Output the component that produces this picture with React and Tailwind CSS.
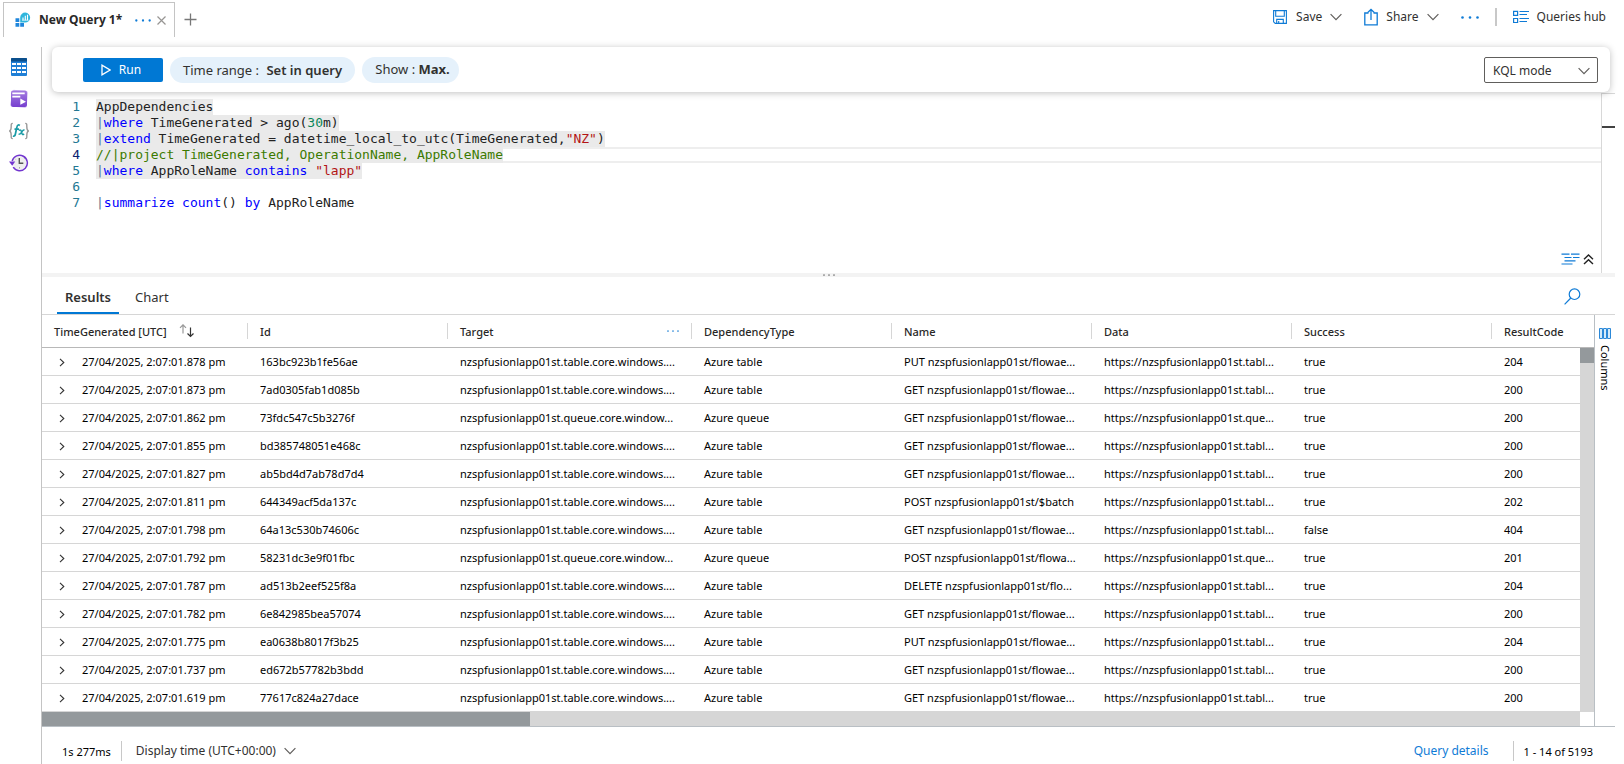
import { useState } from 'react'
import clsx from 'clsx'

const KEYWORD = 'text-[#0000ff]'
const STRING = 'text-[#b31515]'
const NUMBER = 'text-[#098658]'
const COMMENT = 'text-[#3c7a00]'
const PLAIN = 'text-[#222222]'
const PIPE = 'text-[#5a7a96]'

const queryLines = [
  { selected: true, tokens: [['AppDependencies', PLAIN]] },
  { selected: true, tokens: [['|', PIPE], ['where', KEYWORD], [' TimeGenerated > ago(', PLAIN], ['30', NUMBER], ['m)', PLAIN]] },
  { selected: true, tokens: [['|', PIPE], ['extend', KEYWORD], [' TimeGenerated = datetime_local_to_utc(TimeGenerated,', PLAIN], ['"NZ"', STRING], [')', PLAIN]] },
  { selected: true, active: true, tokens: [['//|project TimeGenerated, OperationName, AppRoleName', COMMENT]] },
  { selected: true, tokens: [['|', PIPE], ['where', KEYWORD], [' AppRoleName ', PLAIN], ['contains', KEYWORD], [' ', PLAIN], ['"lapp"', STRING]] },
  { tokens: [] },
  { tokens: [['|', PIPE], ['summarize', KEYWORD], [' ', PLAIN], ['count', KEYWORD], ['() ', PLAIN], ['by', KEYWORD], [' AppRoleName', PLAIN]] },
]

const TABLE_HOST = 'nzspfusionlapp01st.table.core.windows....'
const QUEUE_HOST = 'nzspfusionlapp01st.queue.core.window...'
const TABLE_URL = 'https://nzspfusionlapp01st.tabl...'
const QUEUE_URL = 'https://nzspfusionlapp01st.que...'

const rows = [
  ['2:07:01.878', '163bc923b1fe56ae', 'table', 'PUT nzspfusionlapp01st/flowae...', 'true', '204'],
  ['2:07:01.873', '7ad0305fab1d085b', 'table', 'GET nzspfusionlapp01st/flowae...', 'true', '200'],
  ['2:07:01.862', '73fdc547c5b3276f', 'queue', 'GET nzspfusionlapp01st/flowae...', 'true', '200'],
  ['2:07:01.855', 'bd385748051e468c', 'table', 'GET nzspfusionlapp01st/flowae...', 'true', '200'],
  ['2:07:01.827', 'ab5bd4d7ab78d7d4', 'table', 'GET nzspfusionlapp01st/flowae...', 'true', '200'],
  ['2:07:01.811', '644349acf5da137c', 'table', 'POST nzspfusionlapp01st/$batch', 'true', '202'],
  ['2:07:01.798', '64a13c530b74606c', 'table', 'GET nzspfusionlapp01st/flowae...', 'false', '404'],
  ['2:07:01.792', '58231dc3e9f01fbc', 'queue', 'POST nzspfusionlapp01st/flowa...', 'true', '201'],
  ['2:07:01.787', 'ad513b2eef525f8a', 'table', 'DELETE nzspfusionlapp01st/flo...', 'true', '204'],
  ['2:07:01.782', '6e842985bea57074', 'table', 'GET nzspfusionlapp01st/flowae...', 'true', '200'],
  ['2:07:01.775', 'ea0638b8017f3b25', 'table', 'PUT nzspfusionlapp01st/flowae...', 'true', '204'],
  ['2:07:01.737', 'ed672b57782b3bdd', 'table', 'GET nzspfusionlapp01st/flowae...', 'true', '200'],
  ['2:07:01.619', '77617c824a27dace', 'table', 'GET nzspfusionlapp01st/flowae...', 'true', '200'],
]

const headers = ['TimeGenerated [UTC]', 'Id', 'Target', 'DependencyType', 'Name', 'Data', 'Success', 'ResultCode']

function Chevron({ className }) {
  return (
    <svg width="12" height="8" viewBox="0 0 12 8" className={className} fill="none" stroke="currentColor" strokeWidth="1.2">
      <path d="M0.6 1.2 6 6.6l5.4-5.4" />
    </svg>
  )
}

function LogsIcon() {
  return (
    <svg width="16" height="16" viewBox="0 0 16 16">
      <g fill="#1f86dc">
        <path d="M0.5 6.2h3.8V10H0.5zM0.5 11h3.8v3.8H0.5zM5.2 11H9v3.8H5.2z" />
      </g>
      <path d="M10.3 0.6a5 5 0 1 1-.3 10H5.2V5.4a5 5 0 0 1 5.1-4.8z" fill="#2fb6dd" />
      <path d="M8 5.5v2.7M10.3 3.8v4.4M12.5 2.8v5.4" stroke="#fff" strokeWidth="1.1" />
      <path d="M7 8.2h6.5" stroke="#fff" strokeWidth=".7" />
    </svg>
  )
}

function TablesIcon() {
  return (
    <svg width="16" height="18" viewBox="0 0 16 18">
      <rect width="16" height="18" rx="1" fill="#1f7fd6" />
      <path d="M0 3.4V1a1 1 0 0 1 1-1h14a1 1 0 0 1 1 1v2.4z" fill="#0b4f8c" />
      <g fill="#fff">
        <path d="M1 5h4v2H1zM6 5h4v2H6zM11 5h4v2h-4zM1 9h4v2H1zM6 9h4v2H6zM11 9h4v2h-4zM1 13h4v2H1zM6 13h4v2H6zM11 13h4v2h-4z" />
      </g>
    </svg>
  )
}

function QueriesIcon() {
  return (
    <svg width="20" height="20" viewBox="0 0 20 20">
      <defs>
        <linearGradient id="queries" x1="0" y1="0" x2="0" y2="1">
          <stop offset="0" stopColor="#a37be0" />
          <stop offset="1" stopColor="#7740cf" />
        </linearGradient>
      </defs>
      <path d="M4.5.8 17 2a2 2 0 0 1 2 2l-1.3 13a2 2 0 0 1-2 2L3 17.5a2 2 0 0 1-2-2z" fill="#d9c8f6" />
      <rect x="2" y="1.5" width="16" height="16.5" rx="2" fill="url(#queries)" />
      <path d="M3.3 3.5h12.4v1.8H3.3zM3.3 6.8h8v1.8h-8z" fill="#fff" />
      <path d="M11.3 9.6 17 12.7l-5.7 3.1z" fill="#fff" />
    </svg>
  )
}

function FunctionsIcon() {
  return (
    <svg width="20" height="18" viewBox="0 0 20 18" fill="none">
      <path d="M3.8 1.4C2 1.4 2.2 2.3 2.2 4.5S2 8.500.6 9c1.4.5 1.6 2.3 1.6 4.5s-.2 3.1 1.6 3.1" stroke="#999" strokeWidth="1.4" />
      <path d="M16.2 1.4c1.8 0 1.6.9 1.6 3.1s.2 4 1.6 4.5c-1.4.5-1.6 2.3-1.6 4.5s.2 3.1-1.6 3.1" stroke="#999" strokeWidth="1.4" />
      <path d="M10.8 3.5c-1.4-1.2-2.6-.3-2.9 1.5L6.4 12c-.3 1.7-1.2 2.5-2.3 1.7M5.5 7.2h4.5" stroke="#1a9ba6" strokeWidth="1.7" />
      <path d="M9.8 8.5c2-1.5 2.5.2 2.9 2s.8 2.8 2.4 1.4M15.5 7.8c-1.6.2-2.4 1.6-3 2.6s-1.4 2-2.9 1.9" stroke="#1a9ba6" strokeWidth="1.4" />
    </svg>
  )
}

function HistoryIcon() {
  return (
    <svg width="20" height="18" viewBox="0 0 20 18" fill="none">
      <circle cx="10.5" cy="9" r="6.6" fill="#eeeeee" />
      <path d="M3.2 7a7.7 7.7 0 1 1 1 6.2" stroke="#7236cf" strokeWidth="1.5" />
      <path d="M0 7.6h6.2l-3 4.2z" fill="#7236cf" />
      <path d="M10.3 4v5.3h4" stroke="#555" strokeWidth="1.4" />
      <path d="M10.5 13v1.6M15 5l.8-.8M5.8 4.6l.8.8" stroke="#aaa" />
    </svg>
  )
}

function SaveIcon() {
  return (
    <svg width="16" height="16" viewBox="0 0 16 16" fill="none" stroke="#0f7bd6" strokeWidth="1.1">
      <path d="M1.6 1.6h12.8v12.8H3.2L1.6 12.8z" />
      <path d="M3.7 1.6v5.6h8.6V1.6M4.7 14.4v-4h6.6v4M6.7 14.4V12" />
    </svg>
  )
}

function ShareIcon() {
  return (
    <svg width="14" height="18" viewBox="0 0 14 18" fill="none" stroke="#0f7bd6" strokeWidth="1.3">
      <path d="M4.5 5H.8v11.8h12.4V5H9.5M7 12V1.4M3.8 4.5 7 1.3l3.2 3.2" />
    </svg>
  )
}

function HubIcon() {
  return (
    <svg width="16" height="14" viewBox="0 0 16 14" fill="none" stroke="#0f7bd6" strokeWidth="1.2">
      <path d="M.6 1.3h4v4h-4zM.6 8.5h4v4h-4zM6.5 1.5H16M6.5 4.5H14M6.5 8.5H16M6.5 11.5H14" />
    </svg>
  )
}

function Dots({ size = 3, className }) {
  return (
    <svg width={size * 6} height={size} viewBox="0 0 18 3" className={className} fill="currentColor">
      <circle cx="1.5" cy="1.5" r="1.3" />
      <circle cx="9" cy="1.5" r="1.3" />
      <circle cx="16.5" cy="1.5" r="1.3" />
    </svg>
  )
}

function TopBar() {
  return (
    <header className="flex h-[47px] justify-between">
      <div className="flex pt-[2px] pl-[3px]">
        <div className="flex h-[35px] w-[172px] items-center border border-b-0 border-[#c4c4c4] pl-[11px]">
          <LogsIcon />
          <span className="ml-2 text-xs font-bold whitespace-nowrap text-[#292827]">New Query 1*</span>
          <div className="mr-2 ml-auto flex items-center gap-[6px]">
            <button aria-label="Tab options" className="text-[#0f7bd6]">
              <Dots className="w-4" />
            </button>
            <button aria-label="Close tab" className="text-[#979593]">
              <svg width="9" height="9" viewBox="0 0 9 9" stroke="currentColor" strokeWidth="1.2">
                <path d="m.5.5 8 8M8.5.5l-8 8" />
              </svg>
            </button>
          </div>
        </div>
        <button aria-label="New tab" className="ml-[9px] h-[35px] text-[#777777]">
          <svg width="13" height="13" viewBox="0 0 13 13" stroke="currentColor" strokeWidth="1.3">
            <path d="M6.5.5v12M.5 6.5h12" />
          </svg>
        </button>
      </div>

      <div className="flex h-[34px] items-center text-xs text-[#323130]">
        <button className="flex items-center">
          <SaveIcon />
          <span className="ml-2">Save</span>
          <Chevron className="ml-2 text-[#605e5c]" />
        </button>
        <button className="ml-[22px] flex items-center">
          <ShareIcon />
          <span className="ml-2">Share</span>
          <Chevron className="ml-2 text-[#605e5c]" />
        </button>
        <button aria-label="More actions" className="ml-[22px] text-[#0f7bd6]">
          <Dots />
        </button>
        <div className="ml-4 h-[18px] w-[2px] bg-[#c8c8c8]" />
        <button className="mr-[9px] ml-4 flex items-center">
          <HubIcon />
          <span className="ml-2">Queries hub</span>
        </button>
      </div>
    </header>
  )
}

function SideRail() {
  const items = [
    ['Tables', TablesIcon],
    ['Queries', QueriesIcon],
    ['Functions', FunctionsIcon],
    ['Query history', HistoryIcon],
  ]
  return (
    <nav className="flex w-[41px] shrink-0 flex-col gap-3 pt-[10px]">
      {items.map(([label, Icon]) => (
        <button key={label} aria-label={label} className="flex h-5 w-[38px] items-center justify-center">
          <Icon />
        </button>
      ))}
    </nav>
  )
}

function RunBar() {
  return (
    <div className="relative z-10 mr-[5px] ml-[10px] flex h-[45px] items-center rounded-md bg-white pr-3 pl-[31px] text-[13px] text-[#323130] shadow-[0_1px_7px_rgba(0,0,0,0.25)]">
      <button className="flex h-6 w-20 items-center justify-center gap-2 rounded-xs bg-[#0078d4] pr-1 text-xs text-white">
        <svg width="10" height="12" viewBox="0 0 10 12" fill="none" stroke="currentColor" strokeWidth="1.3">
          <path d="M1 1.2v9.6L9 6z" />
        </svg>
        Run
      </button>
      <button className="ml-[7px] h-[26px] w-[185px] rounded-full bg-[#e5f1fb] pt-[2px] whitespace-nowrap">
        Time range : <span className="ml-1 font-semibold">Set in query</span>
      </button>
      <button className="ml-[7px] h-[26px] w-[97px] rounded-full bg-[#e5f1fb] pt-px pl-1 whitespace-nowrap">
        Show : <span className="font-bold">Max.</span>
      </button>
      <div className="relative ml-auto h-[26px] w-[114px]">
        <select aria-label="Editor mode" className="h-full w-full appearance-none rounded-xs border border-[#605e5c] bg-white pt-[2px] pl-2 text-xs">
          <option>KQL mode</option>
          <option>Simple mode</option>
        </select>
        <Chevron className="pointer-events-none absolute top-[10px] right-2 text-[#605e5c]" />
      </div>
    </div>
  )
}

function Editor() {
  return (
    <div className="relative flex h-[181px]">
      <div className="flex-1 pt-[7px] font-['DejaVu_Sans_Mono',monospace] text-[13px] leading-4">
        {queryLines.map((line, i) => (
          <div key={i} className="flex h-4">
            <span className={clsx('w-[38px] text-right', line.active ? 'text-[#0b216f]' : 'text-[#237893]')}>{i + 1}</span>
            <code className={clsx("ml-4 font-['DejaVu_Sans_Mono',monospace] whitespace-pre", line.selected && 'bg-[#eaeaea]')}>
              {line.tokens.map(([text, color], j) => (
                <span key={j} className={color}>{text}</span>
              ))}
            </code>
            {line.active && <div className="flex-1 border-y-2 border-[#eeeeee]" />}
          </div>
        ))}
      </div>
      {/* overview ruler */}
      <div className="mt-px w-[14px] border-t border-l border-[#d8d8d8] pt-8">
        <div className="h-[2px] bg-[#424242]" />
      </div>
      <div className="absolute right-[21px] bottom-2 flex items-center gap-[3px]">
        <button aria-label="Format query">
          <svg width="19" height="12" viewBox="0 0 19 12" stroke="#0f7bd6" strokeWidth="1.2">
            <path d="M.5 1.2h8M10 1.2h8.5M3.5 4.5h7M12 4.5h6.5M3.5 7.8h11M.5 11h11" />
          </svg>
        </button>
        <button aria-label="Collapse editor">
          <svg width="11" height="11" viewBox="0 0 11 11" fill="none" stroke="#222" strokeWidth="1.4">
            <path d="m1 5.3 4.500-4.300L10 5.300M1 10l4.500-4.300L10 10" />
          </svg>
        </button>
      </div>
    </div>
  )
}

function ResultTabs({ tab, setTab }) {
  return (
    <div className="flex h-[38px] items-end justify-between border-b border-[#d6d6d6] pl-[15px] text-[13px] text-[#323130]">
      <div className="flex h-full gap-2" role="tablist">
        {['Results', 'Chart'].map(name => (
          <button
            key={name}
            role="tab"
            aria-selected={tab === name}
            onClick={() => setTab(name)}
            className={clsx('h-full border-b-2 px-2 pt-[7px]', tab === name ? 'border-[#0078d4] font-semibold' : 'border-transparent')}
          >
            {name}
          </button>
        ))}
      </div>
      <button aria-label="Search results" className="mr-[34px] mb-[9px]">
        <svg width="17" height="17" viewBox="0 0 17 17" fill="none" stroke="#0f7bd6" strokeWidth="1.2">
          <circle cx="10.5" cy="6.2" r="5.3" />
          <path d="M6.800 10 .6 16.300" />
        </svg>
      </button>
    </div>
  )
}

function HeaderCell({ name, last }) {
  return (
    <th className="h-[33px] border-b border-[#b8b8b8] p-0 text-left font-medium text-[#292827]">
      <div className={clsx('flex h-4 items-center pl-3', !last && 'border-r border-[#d6d6d6]')}>
        <span className="pt-[2px]">{name}</span>
        {name === 'TimeGenerated [UTC]' && (
          <button aria-label="Sort" className="ml-3">
            <svg width="16" height="14" viewBox="0 0 16 14" fill="none" strokeWidth="1.2">
              <path d="M4 9.500V.8M1 3.800l3-3 3 3" stroke="#999" />
              <path d="M11.500 3.500v9M8.500 9.500l3 3 3-3" stroke="#333" />
            </svg>
          </button>
        )}
        {name === 'Target' && (
          <button aria-label="Column options" className="mr-3 ml-auto text-[#2b88d8]">
            <Dots size={2} />
          </button>
        )}
      </div>
    </th>
  )
}

function ResultsTable() {
  return (
    <div className="min-w-0 flex-1">
      <div className="relative">
        <table className="w-full table-fixed border-separate border-spacing-0 text-[11px] whitespace-nowrap text-black">
          <colgroup>
            <col className="w-[206px]" />
            <col className="w-[200px]" />
            <col className="w-[244px]" />
            <col className="w-[200px]" />
            <col className="w-[200px]" />
            <col className="w-[200px]" />
            <col className="w-[200px]" />
            <col />
          </colgroup>
          <thead>
            <tr>
              {headers.map((name, i) => <HeaderCell key={name} name={name} last={i === headers.length - 1} />)}
            </tr>
          </thead>
          <tbody>
            {rows.map(([time, id, type, name, success, code]) => {
              const cells = [
                id,
                type === 'queue' ? QUEUE_HOST : TABLE_HOST,
                `Azure ${type}`,
                name,
                type === 'queue' ? QUEUE_URL : TABLE_URL,
                success,
                code,
              ]
              return (
                <tr key={id}>
                  <td className="h-7 border-b border-[#d6d6d6] px-0 pt-[2px] pb-0">
                    <div className="flex items-center pl-[17px]">
                      <button aria-label="Expand row" className="w-[23px]">
                        <svg width="6" height="9" viewBox="0 0 6 9" fill="none" stroke="#333" strokeWidth="1.1">
                          <path d="m1 .8 3.800 3.700L1 8.200" />
                        </svg>
                      </button>
                      27/04/2025, {time} pm
                    </div>
                  </td>
                  {cells.map((cell, i) => (
                    <td key={i} className="h-7 border-b border-[#d6d6d6] pt-[2px] pr-0 pb-0 pl-3">{cell}</td>
                  ))}
                </tr>
              )
            })}
          </tbody>
        </table>
        {/* vertical scrollbar */}
        <div className="absolute top-[33px] right-0 bottom-0 w-[14px] bg-[#d6d6d6]">
          <div className="h-[15px] bg-[#94999c]" />
        </div>
      </div>
      <div className="mr-[14px] h-[14px] bg-[#d6d6d6]">
        <div className="h-full w-[488px] bg-[#94999c]" />
      </div>
    </div>
  )
}

function Footer() {
  return (
    <footer className="flex h-[37px] items-center border-t border-[#b9bfc4] pt-[12px] pr-[22px] pl-5 text-xs text-[#323130]">
      <span className="pt-[2px] text-[11px] text-black">1s 277ms</span>
      <div className="ml-[10px] h-5 w-px bg-[#c8c8c8]" />
      <button className="ml-[14px] flex items-center">
        Display time (UTC+00:00)
        <Chevron className="ml-2 text-[#605e5c]" />
      </button>
      <a href="#details" className="ml-auto text-[#0f7bd6]">Query details</a>
      <div className="ml-6 h-5 w-px bg-[#c8c8c8]" />
      <span className="ml-[10px] pt-[2px] text-[11px] text-black">1 - 14 of 5193</span>
    </footer>
  )
}

export default function App() {
  const [tab, setTab] = useState('Results')

  return (
    <div className="flex min-h-screen flex-col bg-white pr-[9px] font-['Noto_Sans','Open_Sans',sans-serif]">
      <TopBar />
      <div className="flex flex-1">
        <SideRail />
        <main className="min-w-0 flex-1 border-l border-[#c4c4c4]">
          <RunBar />
          <Editor />
          <div className="flex h-1 items-center justify-center bg-[#f3f3f3] text-[#777777]">
            <Dots size={2} />
          </div>
          <ResultTabs tab={tab} setTab={setTab} />
          <div className="flex">
            <ResultsTable />
            <button className="flex w-[21px] flex-col items-center gap-[6px] border-l border-[#b9bfc4] pt-[13px] text-[11px] text-black">
              <svg width="12" height="11" viewBox="0 0 12 11" fill="#d5ebfa" stroke="#2b88d8">
                <path d="M.5.5h3v10h-3zM4.5.5h3v10h-3zM8.5.5h3v10h-3z" />
              </svg>
              <span className="[writing-mode:vertical-rl]">Columns</span>
            </button>
          </div>
          <Footer />
        </main>
      </div>
    </div>
  )
}
